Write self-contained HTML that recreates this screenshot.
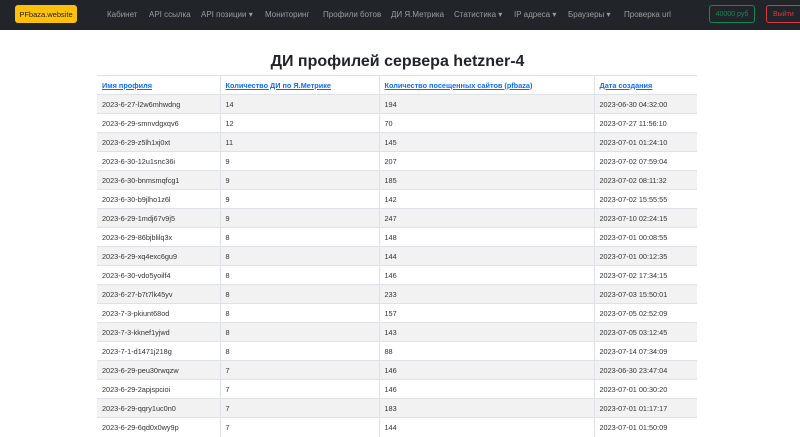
<!DOCTYPE html>
<html><head><meta charset="utf-8"><style>
*{box-sizing:border-box;margin:0;padding:0}
body{width:800px;height:435px;overflow:hidden;background:#fff;font-family:"Liberation Sans","DejaVu Sans",sans-serif;color:#212529}
.nav{height:30px;background:#212529;position:relative;font-size:8px;color:#9a9da0}
.nav span{position:absolute;top:10px;white-space:nowrap}
.logo{position:absolute;left:15px;top:5px;width:62px;height:18px;background:#ffc107;border-radius:3px;color:#222;font-size:7.5px;display:flex;align-items:center;justify-content:center}
.bal{position:absolute;left:709px;top:5px;width:46px;height:18px;border:1px solid #198754;border-radius:3px;color:#198754;font-size:7px;display:flex;align-items:center;justify-content:center}
.out{position:absolute;left:766px;top:5px;width:40px;height:18px;border:1px solid #dc3545;border-radius:3px;color:#dc3545;font-size:7px;display:flex;align-items:center;padding-left:6px}
h1{position:absolute;top:53px;left:0;width:795px;text-align:center;font-size:16px;font-weight:bold;color:#212529}
table{position:absolute;left:97px;top:75px;width:600px;border-collapse:collapse;font-size:7.3px}
td,th{height:19px;padding:0 5px;border-top:1px solid #dee2e6;text-align:left;vertical-align:middle;color:#333}
th{font-weight:bold;color:#0d6efd;text-decoration:underline;height:19px}
td+td,th+th{border-left:1px solid #dee2e6}
tbody tr:nth-child(odd){background:#f2f2f2}
</style></head><body>
<div class="nav">
<div class="logo">PFbaza.website</div>
<span style="left:107px">Кабинет</span>
<span style="left:149px">API ссылка</span>
<span style="left:201px">API позиции ▾</span>
<span style="left:265px">Мониторинг</span>
<span style="left:323px">Профили ботов</span>
<span style="left:391px">ДИ Я.Метрика</span>
<span style="left:454px">Статистика ▾</span>
<span style="left:514px">IP адреса ▾</span>
<span style="left:568px">Браузеры ▾</span>
<span style="left:624px">Проверка url</span>
<div class="bal">40000 руб</div>
<div class="out">Выйти</div>
</div>
<h1>ДИ профилей сервера hetzner-4</h1>
<table>
<colgroup><col style="width:123px"><col style="width:159px"><col style="width:215px"><col></colgroup>
<thead><tr><th>Имя профиля</th><th>Количество ДИ по Я.Метрике</th><th>Количество посещенных сайтов (pfbaza)</th><th>Дата создания</th></tr></thead>
<tbody>
<tr><td>2023-6-27-l2w6mhwdng</td><td>14</td><td>194</td><td>2023-06-30 04:32:00</td></tr>
<tr><td>2023-6-29-smnvdgxqv6</td><td>12</td><td>70</td><td>2023-07-27 11:56:10</td></tr>
<tr><td>2023-6-29-z5lh1xj0xt</td><td>11</td><td>145</td><td>2023-07-01 01:24:10</td></tr>
<tr><td>2023-6-30-12u1snc36i</td><td>9</td><td>207</td><td>2023-07-02 07:59:04</td></tr>
<tr><td>2023-6-30-bnmsmqfcg1</td><td>9</td><td>185</td><td>2023-07-02 08:11:32</td></tr>
<tr><td>2023-6-30-b9jlho1z6l</td><td>9</td><td>142</td><td>2023-07-02 15:55:55</td></tr>
<tr><td>2023-6-29-1mdj67v9j5</td><td>9</td><td>247</td><td>2023-07-10 02:24:15</td></tr>
<tr><td>2023-6-29-86bjblilq3x</td><td>8</td><td>148</td><td>2023-07-01 00:08:55</td></tr>
<tr><td>2023-6-29-xq4exc6gu9</td><td>8</td><td>144</td><td>2023-07-01 00:12:35</td></tr>
<tr><td>2023-6-30-vdo5yoilf4</td><td>8</td><td>146</td><td>2023-07-02 17:34:15</td></tr>
<tr><td>2023-6-27-b7t7lk45yv</td><td>8</td><td>233</td><td>2023-07-03 15:50:01</td></tr>
<tr><td>2023-7-3-pkiunt68od</td><td>8</td><td>157</td><td>2023-07-05 02:52:09</td></tr>
<tr><td>2023-7-3-kknef1yjwd</td><td>8</td><td>143</td><td>2023-07-05 03:12:45</td></tr>
<tr><td>2023-7-1-d1471j218g</td><td>8</td><td>88</td><td>2023-07-14 07:34:09</td></tr>
<tr><td>2023-6-29-peu30rwqzw</td><td>7</td><td>146</td><td>2023-06-30 23:47:04</td></tr>
<tr><td>2023-6-29-2apjspcioi</td><td>7</td><td>146</td><td>2023-07-01 00:30:20</td></tr>
<tr><td>2023-6-29-qqry1uc0n0</td><td>7</td><td>183</td><td>2023-07-01 01:17:17</td></tr>
<tr><td>2023-6-29-6qd0x0wy9p</td><td>7</td><td>144</td><td>2023-07-01 01:50:09</td></tr>
</tbody></table>
</body></html>
